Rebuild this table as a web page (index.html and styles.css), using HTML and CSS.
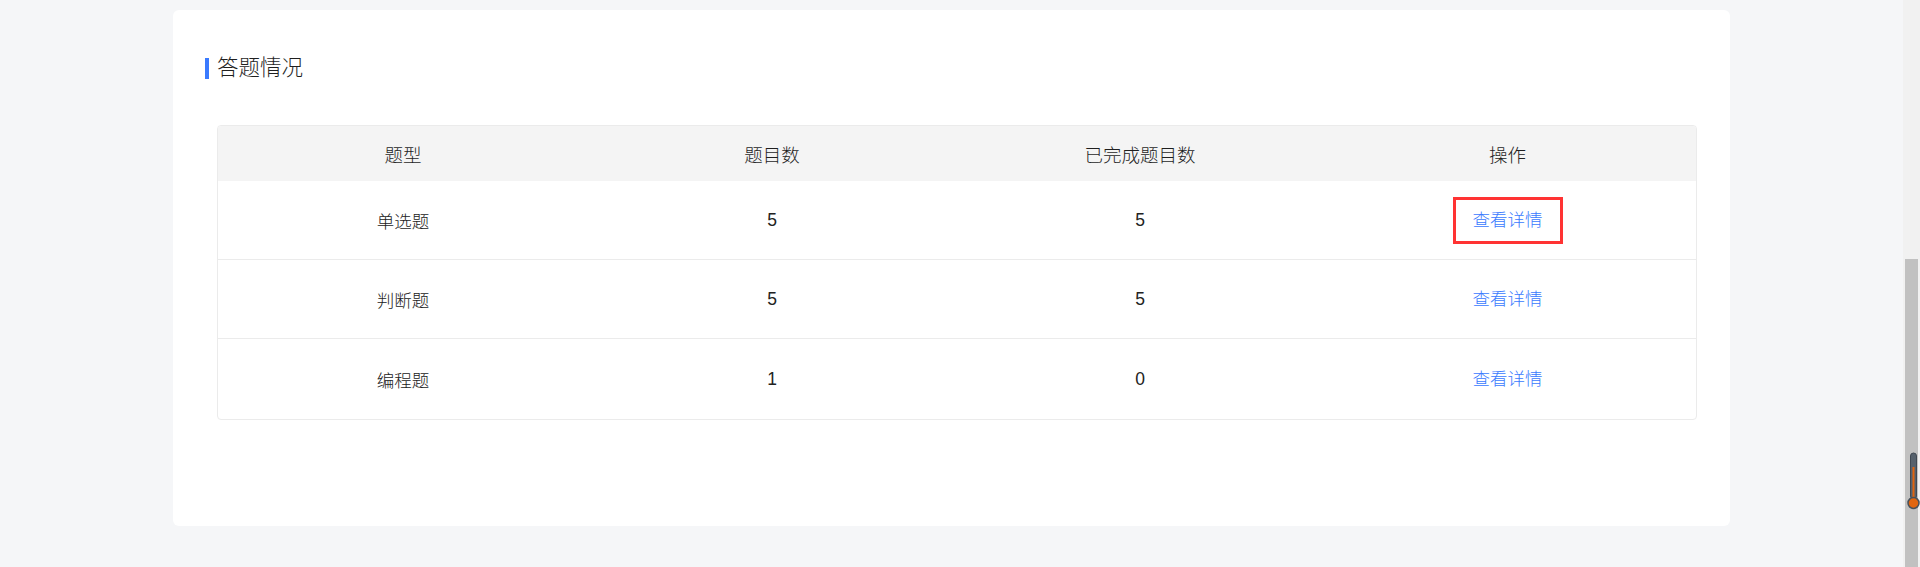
FILE: index.html
```html
<!DOCTYPE html>
<html lang="zh-CN">
<head>
  <meta charset="UTF-8">
  <meta name="viewport" content="width=device-width, initial-scale=1.0"/>
  <title>答题情况</title>
  <link rel="stylesheet" href="styles.css">
</head>
<body>
  <div class="page">
    <main class="main">
      <section class="card">
        <h2 class="card-title">答题情况</h2>
        <table class="answer-table">
          <colgroup>
            <col class="col-type">
            <col class="col-total">
            <col class="col-done">
            <col>
          </colgroup>
          <thead>
            <tr>
              <th>题型</th>
              <th>题目数</th>
              <th>已完成题目数</th>
              <th>操作</th>
            </tr>
          </thead>
          <tbody>
            <tr>
              <td>单选题</td>
              <td>5</td>
              <td>5</td>
              <td><a class="link link-focus" href="#">查看详情</a></td>
            </tr>
            <tr>
              <td>判断题</td>
              <td>5</td>
              <td>5</td>
              <td><a class="link" href="#">查看详情</a></td>
            </tr>
            <tr>
              <td>编程题</td>
              <td>1</td>
              <td>0</td>
              <td><a class="link" href="#">查看详情</a></td>
            </tr>
          </tbody>
        </table>
      </section>
    </main>
    <div class="scrollbar">
      <div class="thumb"></div>
      <!-- 温度计小挂件 -->
      <svg class="thermo" width="15" height="58" viewBox="0 0 15 58">
        <rect x="4.5" y="1" width="6" height="46" rx="3" fill="#56616c" stroke="#3f4852" stroke-width="1"/>
        <rect x="6.5" y="15" width="2" height="34" fill="#e0650f"/>
        <circle cx="7.5" cy="51" r="5.5" fill="#e0650f" stroke="#47515b" stroke-width="1.5"/>
      </svg>
    </div>
  </div>
</body>
</html>
```

FILE: styles.css
```css
html, body {
  margin: 0;
  padding: 0;
  height: 567px;
  overflow: hidden;
}
body {
  font-family: "Liberation Sans", "Noto Sans CJK SC", sans-serif;
  font-weight: 300;
  background: #f5f6f8;
  color: #222;
}
.page {
  display: flex;
  height: 567px;
}
.main {
  flex: 1;
  padding-top: 10px;
}
.card {
  width: 1557px;
  box-sizing: border-box;
  margin: 0 auto;
  background: #fff;
  border-radius: 6px;
  padding: 47px 33px 106px 32px;
}
.card-title {
  display: flex;
  align-items: center;
  gap: 8px;
  margin: 0 0 46px;
  font-size: 21.5px;
  line-height: 22px;
  font-weight: 300;
  color: #1f1f1f;
}
.card-title::before {
  content: "";
  width: 4px;
  height: 21px;
  background: #3a7afe;
}
.answer-table {
  width: 1480px;
  margin-left: 12px;
  table-layout: fixed;
  border-collapse: separate;
  border-spacing: 0;
  border: 1px solid #ebebeb;
  border-radius: 4px;
  overflow: hidden;
}
.col-type {
  width: 370px;
}
.col-total,
.col-done {
  width: 368px;
}
.answer-table th {
  height: 55px;
  padding: 0;
  background: #f4f4f4;
  font-size: 18.5px;
  font-weight: 300;
  color: #1f1f1f;
  text-align: center;
  vertical-align: middle;
}
.answer-table td {
  height: 78px;
  padding: 0;
  font-size: 17.5px;
  color: #222;
  text-align: center;
  vertical-align: middle;
  border-bottom: 1px solid #ebebeb;
}
.answer-table th:last-child,
.answer-table td:last-child {
  padding-right: 5px;
}
.answer-table tbody tr:last-child td {
  height: 80px;
  border-bottom: none;
}
.link {
  color: #3a7afe;
  text-decoration: none;
  line-height: 21px;
}
.link-focus {
  display: inline-block;
  padding: 10px 17px;
  border: 3px solid #ff3333;
}
.scrollbar {
  position: relative;
  width: 17px;
  background: #f1f1f1;
  display: flex;
  flex-direction: column;
  justify-content: flex-end;
}
.thumb {
  height: 308px;
  margin: 0 2px;
  background: #c1c1c1;
}
.thermo {
  position: absolute;
  left: 3px;
  top: 452px;
}
```
